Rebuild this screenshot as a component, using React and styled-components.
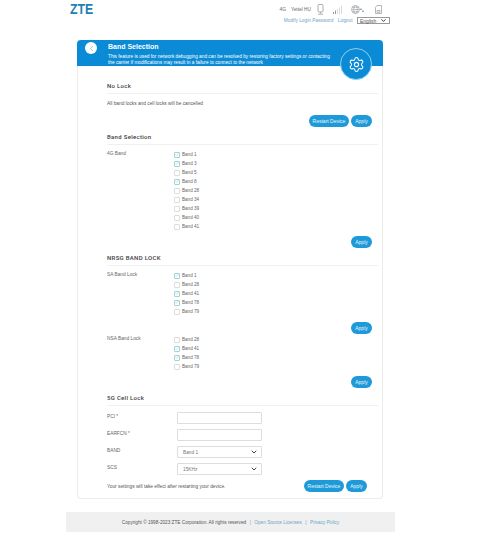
import React from 'react';
import styled, { createGlobalStyle } from 'styled-components';
import { ChevronLeft, Settings, Check, ChevronDown } from 'lucide-react';

const Global = createGlobalStyle`
  html, body { margin: 0; padding: 0; background: #fff; }
  body { font-family: "Liberation Sans", Arial, sans-serif; color: #555; }
`;

const Page = styled.div`
  width: 329px;
  margin-left: 66px;
  padding-bottom: 10px;
`;

const TopBar = styled.header`
  display: flex;
  justify-content: space-between;
  height: 40px;
  padding: 0 5px 0 4px;
  box-sizing: border-box;
`;

const Logo = styled.div`
  font-size: 15px;
  line-height: 17px;
  font-weight: 700;
  color: #1f7fb4;
  transform: scaleX(0.82);
  transform-origin: left center;
`;

const TopRight = styled.div`
  display: flex;
  flex-direction: column;
  align-items: flex-end;
`;

const StatusRow = styled.div`
  display: flex;
  align-items: center;
  height: 17px;
  padding-top: 2px;
  font-size: 4.8px;
  color: #666;
  box-sizing: border-box;
`;

const StatusText = styled.span`
  margin-right: ${(p) => p.$gap}px;
`;

const StatusIcon = styled.svg`
  display: block;
  margin-right: ${(p) => p.$gap}px;
`;

const AccountRow = styled.div`
  display: flex;
  align-items: center;
  height: 7px;
  font-size: 4.8px;
  color: #6aa5c8;
`;

const AccountLink = styled.a`
  margin-right: 4.5px;
`;

const LangSelect = styled.div`
  display: flex;
  align-items: center;
  justify-content: space-between;
  width: 33px;
  height: 7px;
  padding: 0 2px;
  box-sizing: border-box;
  border: 1px solid #999;
  color: #555;
  font-size: 5px;
`;

const Card = styled.main`
  width: 306px;
  margin-left: 11px;
  box-sizing: border-box;
  border: 1px solid #ececec;
  border-top: 0;
  border-radius: 4px;
  padding-bottom: 6px;
`;

const CardHeader = styled.div`
  position: relative;
  display: flex;
  height: 26px;
  margin: 0 -1px;
  padding-left: 31px;
  background: #0b8bd6;
  border-radius: 4px 4px 0 0;
  color: #fff;
`;

const BackButton = styled.div`
  position: absolute;
  left: 8px;
  top: 2px;
  display: flex;
  align-items: center;
  justify-content: center;
  width: 12px;
  height: 12px;
  border-radius: 50%;
  background: #fff;
  color: #4a9ccb;
`;

const HeaderText = styled.div`
  padding-top: 2px;
`;

const Title = styled.div`
  font-size: 7px;
  line-height: 9px;
  font-weight: 700;
`;

const Desc = styled.div`
  width: 225px;
  margin-top: 2.5px;
  font-size: 4.75px;
  line-height: 6.5px;
`;

const GearBadge = styled.div`
  position: absolute;
  left: 263px;
  top: 8px;
  display: flex;
  align-items: center;
  justify-content: center;
  width: 32px;
  height: 32px;
  box-sizing: border-box;
  border: 1px solid #8fd0f2;
  border-radius: 50%;
  background: #0b8bd6;
  color: #fff;
`;

const Body = styled.div`
  padding: 15px 4px 0 29px;
`;

const Heading = styled.h2`
  margin: ${(p) => (p.$first ? 0 : 5)}px 0 0;
  height: 12px;
  line-height: 10px;
  font-family: Roboto, "Liberation Sans", sans-serif;
  font-size: 6px;
  font-weight: 500;
  letter-spacing: 0.3px;
  color: #3c3c3c;
  border-bottom: 1px solid #f0f0f0;
  box-sizing: content-box;
`;

const Note = styled.p`
  margin: 5px 0 0;
  font-size: 4.8px;
  line-height: 10px;
  color: #555;
`;

const Actions = styled.div`
  display: flex;
  justify-content: flex-end;
  gap: 2px;
  margin-top: ${(p) => p.$top}px;
  padding-right: 6px;
`;

const Button = styled.button`
  height: 12px;
  width: ${(p) => p.$w}px;
  padding: 0;
  border: 0;
  border-radius: 6px;
  background: #1f9ad9;
  color: #e8f6fd;
  font-family: inherit;
  font-size: 5px;
`;

const BandGroup = styled.div`
  display: flex;
  margin-top: ${(p) => p.$top}px;
`;

const GroupLabel = styled.div`
  width: 66.5px;
  font-size: 4.8px;
  line-height: 7px;
  color: #666;
`;

const BandList = styled.div`
  display: flex;
  flex-direction: column;
`;

const BandRow = styled.div`
  display: flex;
  align-items: center;
  height: 9px;
  font-size: 4.6px;
  color: #666;
`;

const Box = styled.span`
  display: flex;
  align-items: center;
  justify-content: center;
  width: 6px;
  height: 6px;
  margin-right: 2.5px;
  box-sizing: border-box;
  border: 0.6px solid ${(p) => (p.$on ? '#a3d2d8' : '#ddd')};
  border-radius: 1px;
  color: #74b3c2;
`;

const Form = styled.div`
  display: flex;
  flex-direction: column;
  gap: 5px;
  margin-top: 6px;
`;

const FormRow = styled.div`
  display: flex;
  height: 12px;
`;

const FormLabel = styled.div`
  width: 70px;
  font-size: 4.8px;
  line-height: 9px;
  color: #666;
`;

const Field = styled.div`
  display: flex;
  align-items: center;
  justify-content: space-between;
  width: 85px;
  height: 12px;
  padding: 0 3px 0 5px;
  box-sizing: border-box;
  border: 1px solid #ddd;
  border-radius: 1px;
  font-size: 4.8px;
  color: #777;
`;

const BottomRow = styled.div`
  display: flex;
  align-items: center;
  justify-content: space-between;
  margin-top: 5px;
  padding-right: 11px;
`;

const BottomNote = styled.span`
  font-size: 4.8px;
  color: #555;
`;

const ButtonPair = styled.div`
  display: flex;
  gap: 2px;
`;

const Footer = styled.footer`
  display: flex;
  align-items: center;
  justify-content: center;
  gap: 3.5px;
  height: 20px;
  margin-top: 13px;
  background: #f0f0f0;
  font-size: 4.7px;
  color: #555;
`;

const FooterLink = styled.a`
  color: #6aa5c8;
`;

const Sep = styled.span`
  color: #6aa5c8;
`;

const Band = ({ name, on }) => (
  <BandRow>
    <Box $on={on}>{on && <Check size={5} strokeWidth={2.5} />}</Box>
    {name}
  </BandRow>
);

const Bands = ({ items }) => (
  <BandList>
    {items.map(([name, on]) => (
      <Band key={name} name={name} on={on} />
    ))}
  </BandList>
);

const lte = [['Band 1', true], ['Band 3', true], ['Band 5', false], ['Band 8', true], ['Band 28', false], ['Band 34', false], ['Band 39', false], ['Band 40', false], ['Band 41', false]];
const sa = [['Band 1', true], ['Band 28', false], ['Band 41', true], ['Band 78', true], ['Band 79', false]];
const nsa = [['Band 28', false], ['Band 41', true], ['Band 78', true], ['Band 79', false]];

export default function App() {
  return (
    <Page>
      <Global />
      <TopBar>
        <Logo>ZTE</Logo>
        <TopRight>
          <StatusRow>
            <StatusText $gap={5}>4G</StatusText>
            <StatusText $gap={6}>Yettel HU</StatusText>
            <StatusIcon $gap={9} width="7" height="11" viewBox="0 0 7 11" fill="none" stroke="#999" strokeWidth="0.8">
              <rect x="1" y="0.5" width="5" height="7.5" rx="1" />
              <path d="M3.5 8v1.5M1 10.2h5" />
            </StatusIcon>
            <StatusIcon $gap={9} width="9" height="8" viewBox="0 0 9 8" fill="#dcdcdc">
              <rect x="0" y="6" width="1" height="2" fill="#999" />
              <rect x="2" y="4.5" width="1" height="3.5" fill="#999" />
              <rect x="4" y="3" width="1" height="5" />
              <rect x="6" y="1.5" width="1" height="6.5" />
              <rect x="8" y="0" width="1" height="8" />
            </StatusIcon>
            <StatusIcon $gap={11} width="13" height="9" viewBox="0 0 13 9" fill="none" stroke="#999" strokeWidth="0.6">
              <circle cx="4.5" cy="4.5" r="4" />
              <ellipse cx="4.5" cy="4.5" rx="1.8" ry="4" />
              <path d="M0.5 4.5h8M1.2 2.3h6.6M1.2 6.7h6.6" />
              <circle cx="10" cy="4.2" r="0.8" fill="#3a86b8" stroke="none" />
              <circle cx="12" cy="6.2" r="0.8" fill="#3a86b8" stroke="none" />
            </StatusIcon>
            <StatusIcon $gap={8} width="7" height="9" viewBox="0 0 7 9" fill="none" stroke="#999" strokeWidth="0.7">
              <path d="M2 0.5h4.5v8h-6V2.5z" />
              <path d="M2 5.5h3v1.8H2z" />
            </StatusIcon>
          </StatusRow>
          <AccountRow>
            <AccountLink>Modify Login Password</AccountLink>
            <AccountLink>Logout</AccountLink>
            <LangSelect>
              English
              <ChevronDown size={7} strokeWidth={3} color="#222" />
            </LangSelect>
          </AccountRow>
        </TopRight>
      </TopBar>

      <Card>
        <CardHeader>
          <BackButton>
            <ChevronLeft size={9} strokeWidth={1.5} />
          </BackButton>
          <HeaderText>
            <Title>Band Selection</Title>
            <Desc>
              This feature is used for network debugging and can be resolved by restoring factory settings or contacting
              the carrier if modifications may result in a failure to connect to the network
            </Desc>
          </HeaderText>
          <GearBadge>
            <Settings size={17} strokeWidth={1.5} />
          </GearBadge>
        </CardHeader>

        <Body>
          <Heading $first>No Lock</Heading>
          <Note>All band locks and cell locks will be cancelled</Note>
          <Actions $top={6}>
            <Button $w={40}>Restart Device</Button>
            <Button $w={21}>Apply</Button>
          </Actions>

          <Heading>Band Selection</Heading>
          <BandGroup $top={5}>
            <GroupLabel>4G Band</GroupLabel>
            <Bands items={lte} />
          </BandGroup>
          <Actions $top={5}>
            <Button $w={21}>Apply</Button>
          </Actions>

          <Heading>NRSG BAND LOCK</Heading>
          <BandGroup $top={5}>
            <GroupLabel>SA Band Lock</GroupLabel>
            <Bands items={sa} />
          </BandGroup>
          <Actions $top={6}>
            <Button $w={21}>Apply</Button>
          </Actions>
          <BandGroup $top={1}>
            <GroupLabel>NSA Band Lock</GroupLabel>
            <Bands items={nsa} />
          </BandGroup>
          <Actions $top={5}>
            <Button $w={21}>Apply</Button>
          </Actions>

          <Heading>5G Cell Lock</Heading>
          <Form>
            <FormRow>
              <FormLabel>PCI *</FormLabel>
              <Field />
            </FormRow>
            <FormRow>
              <FormLabel>EARFCN *</FormLabel>
              <Field />
            </FormRow>
            <FormRow>
              <FormLabel>BAND</FormLabel>
              <Field>
                Band 1
                <ChevronDown size={8} strokeWidth={3} color="#444" />
              </Field>
            </FormRow>
            <FormRow>
              <FormLabel>SCS</FormLabel>
              <Field>
                15KHz
                <ChevronDown size={8} strokeWidth={3} color="#444" />
              </Field>
            </FormRow>
          </Form>
          <BottomRow>
            <BottomNote>Your settings will take effect after restarting your device.</BottomNote>
            <ButtonPair>
              <Button $w={40}>Restart Device</Button>
              <Button $w={21}>Apply</Button>
            </ButtonPair>
          </BottomRow>
        </Body>
      </Card>

      <Footer>
        <span>Copyright © 1998-2023 ZTE Corporation. All rights reserved</span>
        <Sep>|</Sep>
        <FooterLink>Open Source Licenses</FooterLink>
        <Sep>|</Sep>
        <FooterLink>Privacy Policy</FooterLink>
      </Footer>
    </Page>
  );
}
